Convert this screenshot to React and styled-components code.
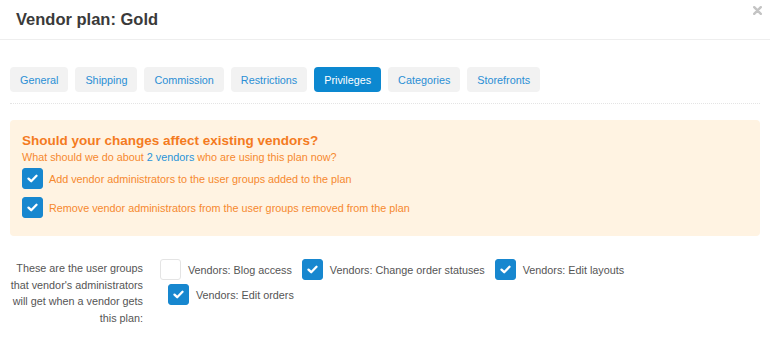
import React from "react";
import styled, { createGlobalStyle } from "styled-components";

const Global = createGlobalStyle`
  html, body { margin: 0; padding: 0; background: #fff; }
  body { font-family: "Liberation Sans", Arial, sans-serif; }
  * { box-sizing: border-box; }
`;

const Modal = styled.div`
  position: relative;
  width: 770px;
  height: 355px;
  background: #fff;
  overflow: hidden;
`;

const Header = styled.div`
  height: 40px;
  padding: 8px 16px 0;
  border-bottom: 1px solid #eeeeee;
`;

const Title = styled.h1`
  margin: 0;
  font-size: 16.5px;
  line-height: 22px;
  font-weight: bold;
  color: #3a3a3a;
`;

const Close = styled.button`
  position: absolute;
  top: 5px;
  right: 7px;
  width: 11px;
  height: 11px;
  padding: 0;
  border: 0;
  background: none;
  display: flex;
  align-items: center;
  justify-content: center;
`;

const Body = styled.div`
  padding: 0 10px;
`;

const Tabs = styled.div`
  display: flex;
  gap: 7px;
  margin-top: 27px;
  padding-bottom: 11px;
  border-bottom: 1px dotted #e4e4e4;
`;

const Tab = styled.div`
  height: 25px;
  padding: 0 10px;
  display: flex;
  align-items: center;
  border-radius: 4px;
  font-size: 10.8px;
  background: ${(p) => (p.$active ? "#0c88d0" : "#f2f2f2")};
  color: ${(p) => (p.$active ? "#ffffff" : "#2a8fd5")};
`;

const Notice = styled.div`
  margin-top: 16px;
  height: 116px;
  padding: 12px 12px 0;
  background: #fff3e2;
  border-radius: 4px;
  color: #f6892f;
`;

const NoticeTitle = styled.div`
  font-size: 13.5px;
  line-height: 17px;
  font-weight: bold;
  color: #f47b1f;
`;

const NoticeText = styled.div`
  font-size: 10.8px;
  line-height: 16px;
`;

const Link = styled.span`
  color: #2a93d8;
`;

const Options = styled.div`
  display: flex;
  flex-direction: column;
  gap: 8px;
  margin-top: 3px;
`;

const Option = styled.label`
  display: flex;
  align-items: center;
  gap: ${(p) => p.$gap || 6}px;
  font-size: 10.8px;
  line-height: 16px;
`;

const Box = styled.span`
  flex: none;
  width: 21px;
  height: 21px;
  border-radius: 3px;
  display: flex;
  align-items: center;
  justify-content: center;
  background: ${(p) => (p.$checked ? "#1787cf" : "#ffffff")};
  border: 1px solid ${(p) => (p.$checked ? "#1787cf" : "#e4e4e4")};
`;

const Groups = styled.div`
  display: grid;
  grid-template-columns: 139px 1fr;
  column-gap: 9px;
  margin-top: 23px;
  margin-left: -6px;
`;

const GroupsLabel = styled.div`
  text-align: right;
  font-size: 10.8px;
  line-height: 16.7px;
  color: #555555;
  padding-top: 1px;
`;

const GroupList = styled.div`
  display: flex;
  flex-wrap: wrap;
  align-content: flex-start;
  align-items: flex-start;
  column-gap: 10px;
  row-gap: 4px;
  padding-left: 16px;
  padding-right: 40px;
  color: #555555;

  & > *:first-child {
    margin-left: -8px;
  }
`;

const Check = () => (
  <svg width="11" height="9" viewBox="0 0 11 9">
    <path d="M1.5 4.6 L4.2 7.2 L9.5 1.8" fill="none" stroke="#fff" strokeWidth="2.3" strokeLinecap="round" strokeLinejoin="round" />
  </svg>
);

const Checkbox = ({ checked }) => (
  <Box $checked={checked}>{checked && <Check />}</Box>
);

const tabs = ["General", "Shipping", "Commission", "Restrictions", "Privileges", "Categories", "Storefronts"];
const groups = [
  { label: "Vendors: Blog access", checked: false },
  { label: "Vendors: Change order statuses", checked: true },
  { label: "Vendors: Edit layouts", checked: true },
  { label: "Vendors: Edit orders", checked: true },
];

export default function App() {
  return (
    <>
      <Global />
      <Modal>
        <Header>
          <Title>Vendor plan: Gold</Title>
        </Header>
        <Close aria-label="Close">
          <svg width="9" height="9" viewBox="0 0 9 9">
            <path d="M1.2 1.2 L7.8 7.8 M7.8 1.2 L1.2 7.8" stroke="#c4c4c4" strokeWidth="2.4" strokeLinecap="round" />
          </svg>
        </Close>
        <Body>
          <Tabs>
            {tabs.map((t) => (
              <Tab key={t} $active={t === "Privileges"}>{t}</Tab>
            ))}
          </Tabs>
          <Notice>
            <NoticeTitle>Should your changes affect existing vendors?</NoticeTitle>
            <NoticeText>
              What should we do about <Link>2 vendors</Link> who are using this plan now?
            </NoticeText>
            <Options>
              <Option>
                <Checkbox checked />
                Add vendor administrators to the user groups added to the plan
              </Option>
              <Option>
                <Checkbox checked />
                Remove vendor administrators from the user groups removed from the plan
              </Option>
            </Options>
          </Notice>
          <Groups>
            <GroupsLabel>
              These are the user groups that vendor's administrators will get when a vendor gets this plan:
            </GroupsLabel>
            <GroupList>
              {groups.map((g) => (
                <Option key={g.label} $gap={7}>
                  <Checkbox checked={g.checked} />
                  {g.label}
                </Option>
              ))}
            </GroupList>
          </Groups>
        </Body>
      </Modal>
    </>
  );
}
